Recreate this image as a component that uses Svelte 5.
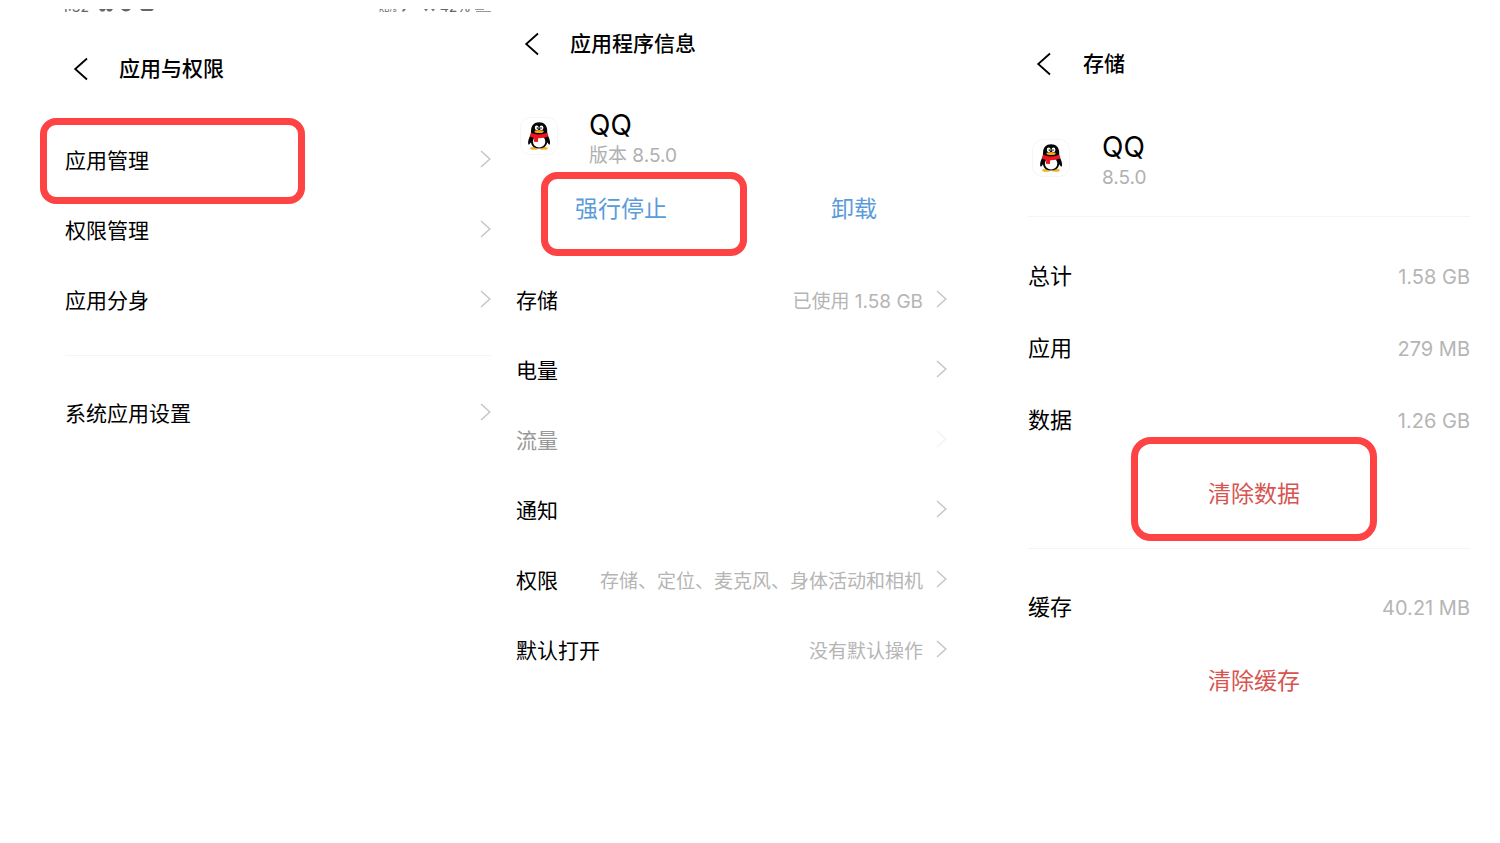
<script>
  const manageRows = ['应用管理', '权限管理', '应用分身'];
  const infoRows = [
    { label: '存储', value: '已使用 1.58 GB' },
    { label: '电量', value: '' },
    { label: '流量', value: '', disabled: true },
    { label: '通知', value: '' },
    { label: '权限', value: '存储、定位、麦克风、身体活动和相机' },
    { label: '默认打开', value: '没有默认操作' }
  ];
  const storageRows = [
    { label: '总计', value: '1.58 GB' },
    { label: '应用', value: '279 MB' },
    { label: '数据', value: '1.26 GB' }
  ];
</script>

{#snippet back()}
  <button class="back" aria-label="返回">
    <svg width="16" height="24" viewBox="0 0 16 24" fill="none" stroke="#000" stroke-width="1.8">
      <path d="M14 1.5 2.2 12 14 22.5" />
    </svg>
  </button>
{/snippet}

{#snippet chevron()}
  <svg class="chevron" width="11" height="18" viewBox="0 0 11 18" fill="none" stroke="#c6c6c6" stroke-width="1.5">
    <path d="M1 1 9.8 9 1 17" />
  </svg>
{/snippet}

{#snippet penguin()}
  <svg class="app-icon" width="38" height="38" viewBox="0 0 38 38" aria-hidden="true">
    <rect x=".5" y=".5" width="37" height="37" rx="10" fill="#fff" stroke="#f5f5f5" />
    <ellipse cx="14.2" cy="31.2" rx="4" ry="1.5" fill="#f2b320" />
    <ellipse cx="23.8" cy="31.2" rx="4" ry="1.5" fill="#f2b320" />
    <path d="M11.2 17C8.800 20.500 7.600 24.500 8.300 27.200 8.800 28.400 10.200 26.500 11 25.200 11.500 29.500 14.500 31.400 19 31.400S26.600 29.500 27.200 25.200C28 26.500 29.400 28.400 29.900 27.200 30.600 24.500 29.300 20.500 27 17Z" fill="#050505" />
    <ellipse cx="19.1" cy="24.6" rx="6.2" ry="6" fill="#fff" />
    <path d="M11 18V13.5C11 8.500 14.200 5.200 19.100 5.200S27.200 8.500 27.200 13.500V18Z" fill="#050505" />
    <ellipse cx="16.7" cy="10.8" rx="1.9" ry="2.400" fill="#fff" />
    <ellipse cx="21.5" cy="10.8" rx="1.9" ry="2.400" fill="#fff" />
    <circle cx="17.300" cy="11.100" r=".8" fill="#111" />
    <circle cx="21" cy="11.100" r=".8" fill="#111" />
    <ellipse cx="19.100" cy="14.600" rx="4.600" ry="1.500" fill="#f5a81c" />
    <path d="M10.800 15.800Q19 19 27.400 15.800L28.400 19.200Q23.500 21.500 18.200 21.300L17.900 25 13.900 24.700 14.200 20.900Q11.500 20.400 9.800 19.200Z" fill="#ec1620" />
  </svg>
{/snippet}

<main>
  <section class="panel manage">
    <div class="status" aria-hidden="true">
      <span class="clock">1:32</span>
      <svg class="notices" width="56" height="3" viewBox="0 0 56 3" fill="#666">
        <path d="M0 0H7L5 2.500H2ZM7 0H14L12 2.500H9ZM22 0H32Q27 5 22 0ZM41 0H55L53 2H43Z" />
      </svg>
      <span class="speed">KB/s</span>
      <svg width="34" height="3" viewBox="0 0 34 3" fill="#777">
        <path d="M2 0H5L3 2.500H1ZM23 0H27L25 2.500ZM30 0H34L32 2.500Z" />
      </svg>
      <span class="charge">42%</span>
      <svg width="16" height="3" viewBox="0 0 16 3" fill="none" stroke="#999">
        <path d="M0 .5H9M1 2.500H16" />
      </svg>
    </div>
    <header>
      {@render back()}
      <h1>应用与权限</h1>
    </header>
    {#each manageRows as label, i}
      <button class="row">
        <span>{label}</span>
        {@render chevron()}
        {#if i === 0}<i class="mark mark-row"></i>{/if}
      </button>
    {/each}
    <hr />
    <button class="row"><span>系统应用设置</span>{@render chevron()}</button>
  </section>

  <section class="panel info">
    <header>
      {@render back()}
      <h1>应用程序信息</h1>
    </header>
    <div class="app">
      {@render penguin()}
      <div class="about">
        <h2>QQ</h2>
        <p>版本 8.5.0</p>
      </div>
    </div>
    <div class="actions">
      <button>强行停止<i class="mark mark-stop"></i></button>
      <button>卸载</button>
    </div>
    {#each infoRows as row}
      <button class="row" class:dim={row.disabled} disabled={row.disabled}>
        <span>{row.label}</span>
        <span class="value">{row.value}</span>
        {@render chevron()}
      </button>
    {/each}
  </section>

  <section class="panel storage">
    <header>
      {@render back()}
      <h1>存储</h1>
    </header>
    <div class="app">
      {@render penguin()}
      <div class="about">
        <h2>QQ</h2>
        <p>8.5.0</p>
      </div>
    </div>
    <hr />
    {#each storageRows as row}
      <div class="row">
        <span>{row.label}</span>
        <span class="value">{row.value}</span>
      </div>
    {/each}
    <button class="clear">清除数据<i class="mark mark-clear"></i></button>
    <hr />
    <div class="row">
      <span>缓存</span>
      <span class="value">40.21 MB</span>
    </div>
    <button class="clear">清除缓存</button>
  </section>
</main>

<style>
  :global(body) {
    margin: 0;
    background: #fff;
  }

  main {
    display: grid;
    grid-template-columns: repeat(3, 1fr);
    font-family: Inter, 'Noto Sans CJK SC', sans-serif;
    font-size: 21px;
    color: #000;
  }

  .panel {
    display: flex;
    flex-direction: column;
    min-width: 0;
  }

  .manage {
    padding: 9px 9px 0 65px;
  }

  .info {
    padding: 19px 53px 0 16px;
  }

  .storage {
    padding: 39px 30px 0 28px;
    font-size: 22px;
  }

  button {
    margin: 0;
    padding: 0;
    border: 0;
    background: none;
    font: inherit;
    color: inherit;
    text-align: left;
    cursor: pointer;
  }

  h1,
  h2,
  p {
    margin: 0;
  }

  .status {
    display: flex;
    align-items: flex-end;
    height: 3px;
    margin-left: -3px;
    overflow: hidden;
    font-size: 14px;
    line-height: 10px;
    color: #666;
  }

  .notices {
    margin-left: 10px;
  }

  .speed {
    margin-left: auto;
    margin-right: 4px;
    font-size: 8px;
    line-height: 6px;
  }

  .charge {
    margin: 0 4px 0 5px;
  }

  header {
    display: flex;
    align-items: center;
    gap: 30px;
    height: 50px;
    padding-left: 8px;
  }

  .manage header {
    margin: 32px 0 31px;
  }

  .storage header {
    gap: 31px;
  }

  .back {
    display: flex;
  }

  h1 {
    font-size: 21px;
    font-weight: 500;
    line-height: 30px;
  }

  .row {
    position: relative;
    box-sizing: border-box;
    display: flex;
    align-items: center;
    height: 70px;
    padding-bottom: 2px;
    white-space: nowrap;
  }

  .storage .row {
    align-items: baseline;
    height: 72px;
    padding: 0;
    line-height: 72px;
  }

  .value {
    margin-left: auto;
    font-size: 19px;
    color: #b5b5b5;
  }

  .storage .value {
    font-size: 20px;
  }

  .chevron {
    flex: none;
    margin-left: 13px;
  }

  .manage .chevron {
    margin-left: auto;
  }

  .dim {
    color: #999;
  }

  .dim .chevron {
    opacity: 0.2;
  }

  hr {
    width: 100%;
    height: 1px;
    margin: 20px 0 22px;
    border: 0;
    background: #f4f4f4;
  }

  .app {
    display: flex;
    align-items: center;
    gap: 31px;
    margin-top: 34px;
    padding-left: 4px;
  }

  .storage .app {
    gap: 32px;
    margin-top: 36px;
  }

  .about {
    padding-top: 4px;
  }

  h2 {
    font-size: 28px;
    font-weight: 400;
    line-height: 36px;
  }

  .app p {
    font-size: 19px;
    line-height: 26px;
    color: #b0b0b0;
  }

  .storage .app + hr {
    margin-top: 25px;
    margin-bottom: 23px;
  }

  .actions {
    display: grid;
    grid-template-columns: 256px 1fr;
    height: 76px;
    margin-bottom: 20px;
    padding-left: 59px;
    font-size: 23px;
    color: #5b9bd9;
  }

  .actions button {
    position: relative;
  }

  .clear {
    position: relative;
    align-self: center;
    height: 72px;
    margin-left: 10px;
    padding: 0 24px;
    font-size: 23px;
    color: #d65551;
  }

  .mark {
    position: absolute;
    box-sizing: border-box;
    border: 7px solid #fd4343;
    border-radius: 16px;
    pointer-events: none;
  }

  .mark-row {
    top: -7px;
    left: -25px;
    width: 265px;
    height: 86px;
  }

  .mark-stop {
    top: 3px;
    left: -34px;
    width: 206px;
    height: 84px;
  }

  .mark-clear {
    inset: -19px -53px -13px;
    border-radius: 20px;
  }
</style>
